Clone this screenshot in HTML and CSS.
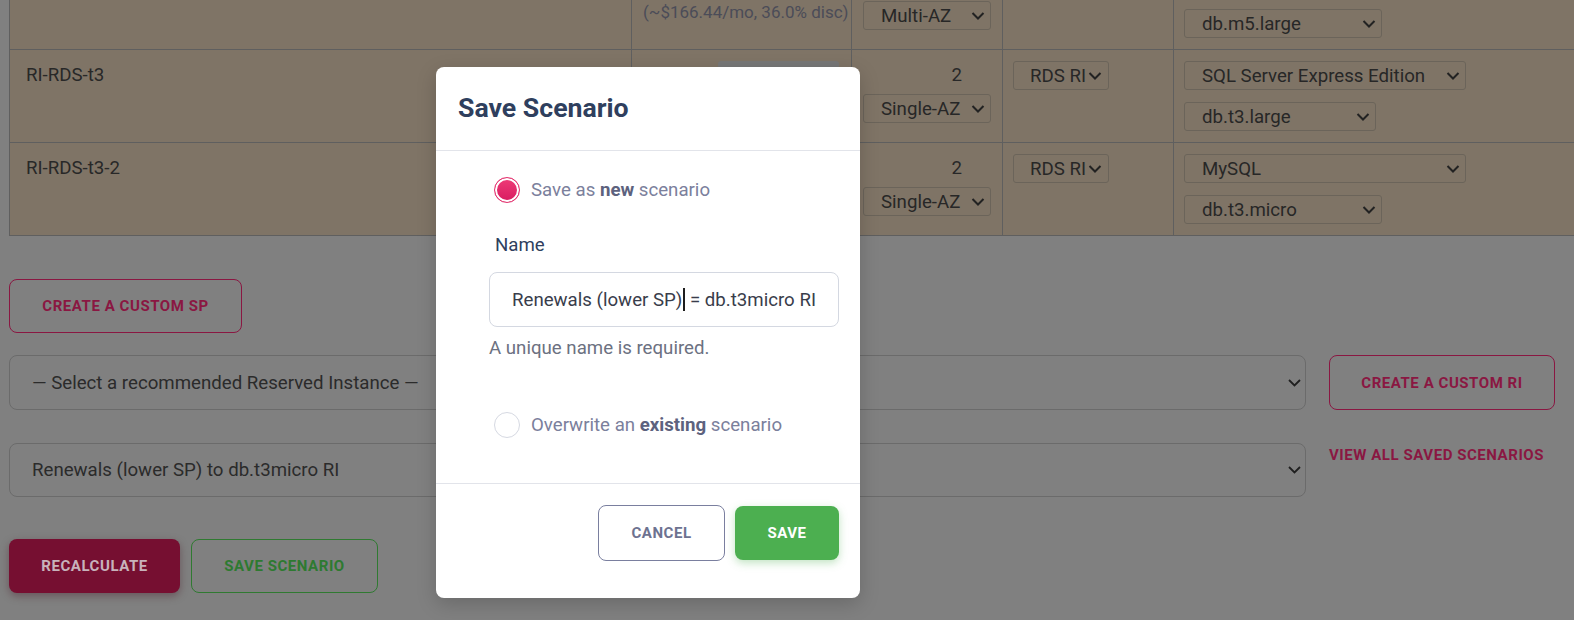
FILE: index.html
```html
<!DOCTYPE html>
<html lang="en">
<head>
<meta charset="utf-8">
<title>Save Scenario</title>
<link rel="stylesheet" href="styles.css">
</head>
<body>
<div class="page">
  <div class="table">
    <!-- row 1 -->
    <div class="cell c1"><div class="name">RI-RDS-m5</div></div>
    <div class="cell c2">
      <div class="price"><span class="cur">$</span><span class="price-box"></span></div>
      <div class="disc">(~$166.44/mo, 36.0% disc)</div>
    </div>
    <div class="cell c3">
      <div class="qty">1</div>
      <div class="sel w128"><span>Multi-AZ</span><svg class="chev" viewBox="0 0 13 8"><path d="M1 1l5.5 5.5L12 1"/></svg></div>
    </div>
    <div class="cell c4">
      <div class="sel w96"><span>RDS RI</span><svg class="chev" viewBox="0 0 13 8"><path d="M1 1l5.5 5.5L12 1"/></svg></div>
    </div>
    <div class="cell c5">
      <div class="sel w282"><span>MySQL</span><svg class="chev" viewBox="0 0 13 8"><path d="M1 1l5.5 5.5L12 1"/></svg></div>
      <div class="sel w198 second"><span>db.m5.large</span><svg class="chev" viewBox="0 0 13 8"><path d="M1 1l5.5 5.5L12 1"/></svg></div>
    </div>

    <!-- row 2 -->
    <div class="cell c1"><div class="name">RI-RDS-t3</div></div>
    <div class="cell c2">
      <div class="price"><span class="cur">$</span><span class="price-box"></span></div>
    </div>
    <div class="cell c3">
      <div class="qty">2</div>
      <div class="sel w128"><span>Single-AZ</span><svg class="chev" viewBox="0 0 13 8"><path d="M1 1l5.5 5.5L12 1"/></svg></div>
    </div>
    <div class="cell c4">
      <div class="sel w96"><span>RDS RI</span><svg class="chev" viewBox="0 0 13 8"><path d="M1 1l5.5 5.5L12 1"/></svg></div>
    </div>
    <div class="cell c5">
      <div class="sel w282"><span>SQL Server Express Edition</span><svg class="chev" viewBox="0 0 13 8"><path d="M1 1l5.5 5.5L12 1"/></svg></div>
      <div class="sel w192 second"><span>db.t3.large</span><svg class="chev" viewBox="0 0 13 8"><path d="M1 1l5.5 5.5L12 1"/></svg></div>
    </div>

    <!-- row 3 -->
    <div class="cell c1"><div class="name">RI-RDS-t3-2</div></div>
    <div class="cell c2"></div>
    <div class="cell c3">
      <div class="qty">2</div>
      <div class="sel w128"><span>Single-AZ</span><svg class="chev" viewBox="0 0 13 8"><path d="M1 1l5.5 5.5L12 1"/></svg></div>
    </div>
    <div class="cell c4">
      <div class="sel w96"><span>RDS RI</span><svg class="chev" viewBox="0 0 13 8"><path d="M1 1l5.5 5.5L12 1"/></svg></div>
    </div>
    <div class="cell c5">
      <div class="sel w282"><span>MySQL</span><svg class="chev" viewBox="0 0 13 8"><path d="M1 1l5.5 5.5L12 1"/></svg></div>
      <div class="sel w198 second"><span>db.t3.micro</span><svg class="chev" viewBox="0 0 13 8"><path d="M1 1l5.5 5.5L12 1"/></svg></div>
    </div>
  </div>

  <div class="actions">
    <button class="btn btn-outline-pink btn-sp">Create a custom SP</button>

    <div class="select-row first-row">
      <div class="big-select"><span>— Select a recommended Reserved Instance —</span><svg class="chev-big" viewBox="0 0 13 8"><path d="M1 1l5.5 5.5L12 1"/></svg></div>
      <button class="btn btn-outline-pink">Create a custom RI</button>
    </div>

    <div class="select-row second-row">
      <div class="big-select"><span>Renewals (lower SP) to db.t3micro RI</span><svg class="chev-big" viewBox="0 0 13 8"><path d="M1 1l5.5 5.5L12 1"/></svg></div>
      <a class="link">View all saved scenarios</a>
    </div>

    <div class="btn-row">
      <button class="btn btn-fill-pink btn-recalc">Recalculate</button>
      <button class="btn btn-outline-green btn-save-scn">Save scenario</button>
    </div>
  </div>
</div>

<div class="modal">
  <div class="modal-header">
    <h2 class="modal-title">Save Scenario</h2>
  </div>
  <div class="modal-body">
    <div class="radio-row">
      <span class="radio checked"></span>
      <span class="radio-label">Save as <b>new</b> scenario</span>
    </div>
    <div class="field-label">Name</div>
    <div class="text-input">Renewals (lower SP)<span class="caret"></span> = db.t3micro RI</div>
    <div class="help">A unique name is required.</div>
    <div class="radio-row radio-second">
      <span class="radio"></span>
      <span class="radio-label">Overwrite an <b>existing</b> scenario</span>
    </div>
  </div>
  <div class="modal-footer">
    <button class="mbtn mbtn-cancel">Cancel</button>
    <button class="mbtn mbtn-save">Save</button>
  </div>
</div>
</body>
</html>
```

FILE: styles.css
```css
* { box-sizing: border-box; }

html, body {
  margin: 0;
  height: 100%;
}

body {
  background: #808080;
  font-family: Roboto, "Liberation Sans", Arial, sans-serif;
  overflow: hidden;
  position: relative;
}

.page {
  padding: 0 19px 0 9px;
}

/* ---------- table (dimmed by backdrop) ---------- */
.table {
  display: grid;
  grid-template-columns: 622px 220px 151px 171px 600px;
  width: max-content;
  margin-top: -43px;
  border-left: 1px solid #5f5f5f;
  background: #7f7466;
}

.cell {
  height: 93px;
  border-right: 1px solid #5f5f5f;
  border-bottom: 1px solid #5f5f5f;
  padding: 11px 10px 0 10px;
  color: #282828;
  font-size: 18.67px;
}

.c1 { padding-left: 16px; }
.name { line-height: 29px; }

.c2 { padding: 11px 12px 0 11px; }
.price {
  display: flex;
  justify-content: flex-end;
  align-items: center;
  gap: 6px;
  height: 29px;
}
.cur { font-size: 17px; color: #282828; }
.price-box {
  width: 121px;
  height: 29px;
  background: #777777;
  border-radius: 3px;
}
.disc {
  margin-top: 3px;
  font-size: 17px;
  line-height: 24px;
  color: #4b4c58;
  white-space: nowrap;
}

.c3 { padding-left: 11px; }
.qty {
  width: 128px;
  height: 29px;
  line-height: 29px;
  text-align: right;
  padding-right: 29px;
}
.c3 .sel { margin-top: 4px; }

.sel {
  display: flex;
  align-items: center;
  height: 29px;
  border: 1px solid #6b645a;
  border-radius: 3px;
  padding: 0 5px 0 17px;
  font-size: 18.67px;
  color: #272727;
  white-space: nowrap;
}
.sel.second { margin-top: 12px; }
.w128 { width: 128px; }
.w96 { width: 96px; padding-left: 16px; padding-right: 6px; }
.w282 { width: 282px; }
.w198 { width: 198px; }
.w192 { width: 192px; }

.chev {
  width: 14px;
  height: 8px;
  margin-left: auto;
  flex: none;
  fill: none;
  stroke: #222;
  stroke-width: 2;
}

/* ---------- actions ---------- */
.actions {
  padding-top: 43px;
}

.btn {
  display: flex;
  align-items: center;
  justify-content: center;
  height: 54px;
  border-radius: 8px;
  font-family: Roboto, "Liberation Sans", Arial, sans-serif;
  font-weight: 700;
  font-size: 15px;
  letter-spacing: 0.55px;
  text-transform: uppercase;
  background: transparent;
  padding: 0;
}

.btn-outline-pink {
  border: 1px solid #8a1742;
  color: #8a1742;
}

.btn-sp { width: 233px; }

.select-row {
  display: grid;
  grid-template-columns: 1fr 226px;
  column-gap: 23px;
}
.first-row { margin-top: 22px; height: 55px; }
.first-row .btn { height: 55px; }
.second-row { margin-top: 33px; height: 54px; }

.big-select {
  display: flex;
  align-items: center;
  height: 100%;
  border: 1px solid #6b6b6b;
  border-radius: 8px;
  padding: 0 4px 0 22px;
  font-size: 18.67px;
  color: #2b2b2b;
}

.chev-big {
  width: 13px;
  height: 8px;
  margin-left: auto;
  fill: none;
  stroke: #1f1f1f;
  stroke-width: 1.8;
}

.link {
  align-self: start;
  margin-top: 3px;
  color: #8a1742;
  font-weight: 700;
  font-size: 15px;
  line-height: 18px;
  letter-spacing: 0.55px;
  text-transform: uppercase;
  white-space: nowrap;
}

.btn-row {
  display: flex;
  gap: 11px;
  margin-top: 42px;
}

.btn-fill-pink {
  width: 171px;
  border: none;
  background: #760f31;
  color: #c8b2bb;
  box-shadow: 0 3px 8px rgba(60, 0, 20, 0.35);
}

.btn-outline-green {
  width: 187px;
  border: 1px solid #2f7a31;
  color: #2e7a31;
}

/* ---------- modal ---------- */
.modal {
  position: absolute;
  left: 436px;
  top: 67px;
  width: 424px;
  background: #ffffff;
  border-radius: 8px;
  box-shadow: 0 6px 20px rgba(0, 0, 0, 0.18);
}

.modal-header {
  padding: 26px 22px 27px;
  border-bottom: 1px solid #e2e4ea;
}

.modal-title {
  margin: 0;
  font-size: 26.67px;
  line-height: 30px;
  font-weight: 700;
  color: #2f3f5e;
}

.modal-body {
  padding: 26px 21px 45px 53px;
  border-bottom: 1px solid #e2e4ea;
}

.radio-row {
  display: flex;
  align-items: center;
  gap: 11px;
  margin-left: 5px;
  height: 26px;
  font-size: 18.67px;
  color: #7b809c;
}
.radio-row b {
  font-weight: 700;
  color: #5d627e;
}
.radio-second { margin-top: 52px; }

.radio {
  width: 26px;
  height: 26px;
  flex: none;
  border-radius: 50%;
  border: 1px solid #d6d9e2;
  background: #ffffff;
}
.radio.checked {
  border: 1.5px solid #e3336f;
  box-shadow: inset 0 0 0 2px #ffffff;
  background: linear-gradient(180deg, #ee3b77 0%, #d81b60 100%);
}

.field-label {
  margin-top: 30px;
  margin-left: 6px;
  font-size: 18.67px;
  line-height: 24px;
  color: #2f3f5e;
}

.text-input {
  margin-top: 15px;
  height: 55px;
  border: 1px solid #d4d8e1;
  border-radius: 8px;
  padding: 0 22px;
  display: flex;
  align-items: center;
  font-size: 18.67px;
  color: #393d4b;
  white-space: pre;
}

.caret {
  display: inline-block;
  width: 2px;
  height: 23px;
  background: #1e1e1e;
  margin-left: 1px;
}

.help {
  margin-top: 9px;
  font-size: 18.67px;
  line-height: 24px;
  color: #6c7181;
}

.modal-footer {
  display: flex;
  justify-content: flex-end;
  align-items: center;
  gap: 10px;
  padding: 21px 21px 37px;
}

.mbtn {
  height: 56px;
  border-radius: 8px;
  font-family: Roboto, "Liberation Sans", Arial, sans-serif;
  font-weight: 700;
  font-size: 15px;
  letter-spacing: 0.55px;
  text-transform: uppercase;
  padding: 0;
}

.mbtn-cancel {
  width: 127px;
  border: 1px solid #7a7f9f;
  background: #ffffff;
  color: #6d7290;
}

.mbtn-save {
  width: 104px;
  height: 54px;
  border: none;
  background: #4caf50;
  color: #ffffff;
  box-shadow: 0 3px 8px rgba(76, 175, 80, 0.35);
}
```
